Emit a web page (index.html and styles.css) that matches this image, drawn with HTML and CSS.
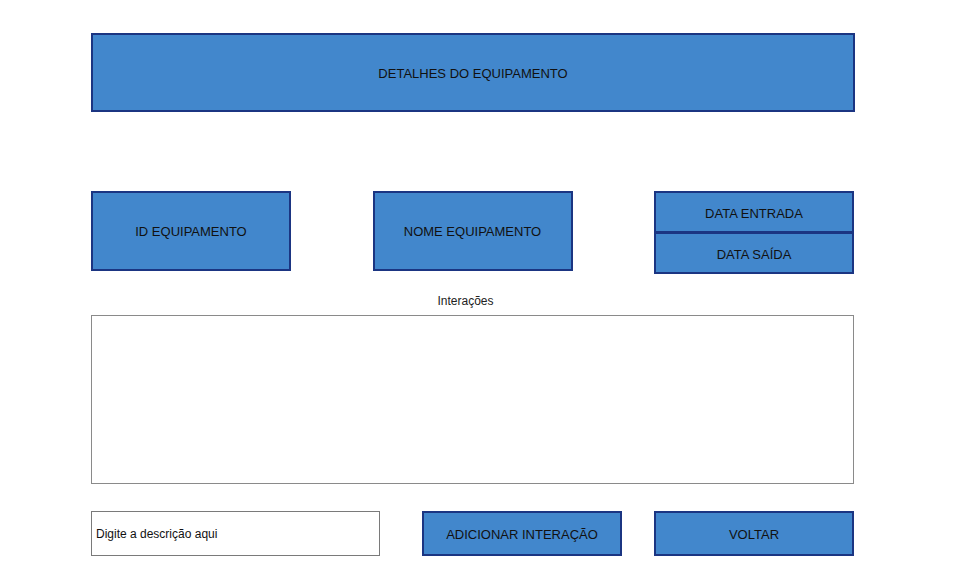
FILE: index.html
```html
<!DOCTYPE html>
<html lang="pt">
<head>
<meta charset="utf-8">
<title>Detalhes do Equipamento</title>
<link rel="stylesheet" href="styles.css">
</head>
<body>
<div class="page">
  <div class="box header">DETALHES DO EQUIPAMENTO</div>
  <div class="info-row">
    <div class="box info">ID EQUIPAMENTO</div>
    <div class="box info">NOME EQUIPAMENTO</div>
    <div class="dates">
      <div class="box date">DATA ENTRADA</div>
      <div class="box date second">DATA SAÍDA</div>
    </div>
  </div>
  <div class="label">Interações</div>
  <div class="interactions"></div>
  <div class="bottom-row">
    <div class="input">Digite a descrição aqui</div>
    <div class="box button add">ADICIONAR INTERAÇÃO</div>
    <div class="box button">VOLTAR</div>
  </div>
</div>
</body>
</html>
```
FILE: styles.css
```css
html, body {
  margin: 0;
  padding: 0;
  background: #ffffff;
}
body {
  font-family: "Liberation Sans", Arial, sans-serif;
  color: #111111;
}
.page {
  padding: 33px 0 0 91px;
  width: 764px;
}
.box {
  box-sizing: border-box;
  background: #4287cc;
  border: 2px solid #1b3582;
  display: flex;
  align-items: center;
  justify-content: center;
  font-size: 13px;
  color: #111111;
}
.header {
  width: 764px;
  height: 79px;
  padding-top: 2px;
}
.info-row {
  margin-top: 79px;
  width: 763px;
  display: flex;
  justify-content: space-between;
  align-items: flex-start;
}
.info {
  width: 200px;
  height: 80px;
}
.dates {
  width: 200px;
  display: flex;
  flex-direction: column;
}
.date {
  width: 200px;
  height: 42px;
  padding-top: 2px;
}
.date.second {
  margin-top: -1px;
  height: 42px;
}
.label {
  margin-top: 20px;
  width: 763px;
  box-sizing: border-box;
  padding-right: 14px;
  text-align: center;
  font-size: 12px;
  line-height: 14px;
  color: #222222;
}
.interactions {
  margin-top: 7px;
  width: 763px;
  height: 169px;
  box-sizing: border-box;
  border: 1px solid #8a8a8a;
}
.bottom-row {
  margin-top: 27px;
  width: 763px;
  display: flex;
  align-items: flex-start;
}
.input {
  box-sizing: border-box;
  width: 289px;
  height: 45px;
  border: 1px solid #7a7a7a;
  display: flex;
  align-items: center;
  padding-left: 4px;
  font-size: 12px;
  color: #111111;
}
.button {
  width: 200px;
  height: 45px;
  padding-top: 2px;
}
.add {
  margin-left: 42px;
  margin-right: 32px;
}
```
